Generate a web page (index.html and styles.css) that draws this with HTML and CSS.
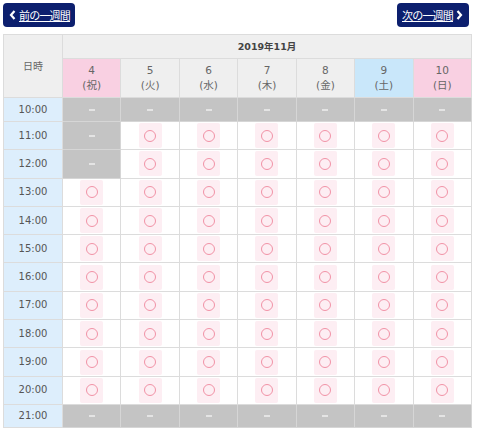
FILE: index.html
```html
<!DOCTYPE html>
<html lang="ja">
<head>
<meta charset="utf-8">
<link rel="stylesheet" href="styles.css">
</head>
<body>
<div class="wrap">
  <div class="nav">
    <a class="btn" href="#"><svg class="chev" width="7" height="10" viewBox="0 0 7 10"><path d="M5.5 1 L2 5 L5.5 9" fill="none" stroke="#fff" stroke-width="2.2"/></svg><span class="lbl">前の一週間</span></a>
    <a class="btn next" href="#"><span class="lbl">次の一週間</span><svg class="chev" width="7" height="10" viewBox="0 0 7 10"><path d="M1.5 1 L5 5 L1.5 9" fill="none" stroke="#fff" stroke-width="2.2"/></svg></a>
  </div>
  <table class="cal">
    <colgroup>
      <col class="c-time"><col><col><col><col><col><col><col>
    </colgroup>
    <thead>
      <tr class="h1"><th rowspan="2" class="corner">日時</th><th colspan="7" class="month">2019年11月</th></tr>
      <tr class="h2">
        <th class="pink">4<br>(祝)</th>
        <th>5<br>(火)</th>
        <th>6<br>(水)</th>
        <th>7<br>(木)</th>
        <th>8<br>(金)</th>
        <th class="blue">9<br>(土)</th>
        <th class="pink">10<br>(日)</th>
      </tr>
    </thead>
    <tbody>
      <tr class="r-first"><th class="time">10:00</th>
        <td class="off"><span class="dash"></span></td><td class="off"><span class="dash"></span></td><td class="off"><span class="dash"></span></td><td class="off"><span class="dash"></span></td><td class="off"><span class="dash"></span></td><td class="off"><span class="dash"></span></td><td class="off"><span class="dash"></span></td></tr>
      <tr class="r"><th class="time">11:00</th>
        <td class="off"><span class="dash"></span></td><td><span class="ok"><span class="ring"></span></span></td><td><span class="ok"><span class="ring"></span></span></td><td><span class="ok"><span class="ring"></span></span></td><td><span class="ok"><span class="ring"></span></span></td><td><span class="ok"><span class="ring"></span></span></td><td><span class="ok"><span class="ring"></span></span></td></tr>
      <tr class="r"><th class="time">12:00</th>
        <td class="off"><span class="dash"></span></td><td><span class="ok"><span class="ring"></span></span></td><td><span class="ok"><span class="ring"></span></span></td><td><span class="ok"><span class="ring"></span></span></td><td><span class="ok"><span class="ring"></span></span></td><td><span class="ok"><span class="ring"></span></span></td><td><span class="ok"><span class="ring"></span></span></td></tr>
      <tr class="r"><th class="time">13:00</th>
        <td><span class="ok"><span class="ring"></span></span></td><td><span class="ok"><span class="ring"></span></span></td><td><span class="ok"><span class="ring"></span></span></td><td><span class="ok"><span class="ring"></span></span></td><td><span class="ok"><span class="ring"></span></span></td><td><span class="ok"><span class="ring"></span></span></td><td><span class="ok"><span class="ring"></span></span></td></tr>
      <tr class="r"><th class="time">14:00</th>
        <td><span class="ok"><span class="ring"></span></span></td><td><span class="ok"><span class="ring"></span></span></td><td><span class="ok"><span class="ring"></span></span></td><td><span class="ok"><span class="ring"></span></span></td><td><span class="ok"><span class="ring"></span></span></td><td><span class="ok"><span class="ring"></span></span></td><td><span class="ok"><span class="ring"></span></span></td></tr>
      <tr class="r"><th class="time">15:00</th>
        <td><span class="ok"><span class="ring"></span></span></td><td><span class="ok"><span class="ring"></span></span></td><td><span class="ok"><span class="ring"></span></span></td><td><span class="ok"><span class="ring"></span></span></td><td><span class="ok"><span class="ring"></span></span></td><td><span class="ok"><span class="ring"></span></span></td><td><span class="ok"><span class="ring"></span></span></td></tr>
      <tr class="r"><th class="time">16:00</th>
        <td><span class="ok"><span class="ring"></span></span></td><td><span class="ok"><span class="ring"></span></span></td><td><span class="ok"><span class="ring"></span></span></td><td><span class="ok"><span class="ring"></span></span></td><td><span class="ok"><span class="ring"></span></span></td><td><span class="ok"><span class="ring"></span></span></td><td><span class="ok"><span class="ring"></span></span></td></tr>
      <tr class="r"><th class="time">17:00</th>
        <td><span class="ok"><span class="ring"></span></span></td><td><span class="ok"><span class="ring"></span></span></td><td><span class="ok"><span class="ring"></span></span></td><td><span class="ok"><span class="ring"></span></span></td><td><span class="ok"><span class="ring"></span></span></td><td><span class="ok"><span class="ring"></span></span></td><td><span class="ok"><span class="ring"></span></span></td></tr>
      <tr class="r"><th class="time">18:00</th>
        <td><span class="ok"><span class="ring"></span></span></td><td><span class="ok"><span class="ring"></span></span></td><td><span class="ok"><span class="ring"></span></span></td><td><span class="ok"><span class="ring"></span></span></td><td><span class="ok"><span class="ring"></span></span></td><td><span class="ok"><span class="ring"></span></span></td><td><span class="ok"><span class="ring"></span></span></td></tr>
      <tr class="r"><th class="time">19:00</th>
        <td><span class="ok"><span class="ring"></span></span></td><td><span class="ok"><span class="ring"></span></span></td><td><span class="ok"><span class="ring"></span></span></td><td><span class="ok"><span class="ring"></span></span></td><td><span class="ok"><span class="ring"></span></span></td><td><span class="ok"><span class="ring"></span></span></td><td><span class="ok"><span class="ring"></span></span></td></tr>
      <tr class="r"><th class="time">20:00</th>
        <td><span class="ok"><span class="ring"></span></span></td><td><span class="ok"><span class="ring"></span></span></td><td><span class="ok"><span class="ring"></span></span></td><td><span class="ok"><span class="ring"></span></span></td><td><span class="ok"><span class="ring"></span></span></td><td><span class="ok"><span class="ring"></span></span></td><td><span class="ok"><span class="ring"></span></span></td></tr>
      <tr class="r-last"><th class="time">21:00</th>
        <td class="off"><span class="dash"></span></td><td class="off"><span class="dash"></span></td><td class="off"><span class="dash"></span></td><td class="off"><span class="dash"></span></td><td class="off"><span class="dash"></span></td><td class="off"><span class="dash"></span></td><td class="off"><span class="dash"></span></td></tr>
    </tbody>
  </table>
</div>
</body>
</html>
```
FILE: styles.css
```css
html, body {
  margin: 0;
  padding: 0;
  background: #fff;
}
body {
  font-family: "DejaVu Sans", "Noto Sans CJK JP", sans-serif;
  color: #555;
}
.wrap {
  padding: 3px 7px 0 3px;
}
.nav {
  display: flex;
  justify-content: space-between;
  height: 24px;
  margin-bottom: 7px;
}
.btn {
  display: flex;
  align-items: center;
  gap: 3px;
  background: #0c1f6e;
  color: #fff;
  border-radius: 4px;
  padding: 0 5px 0 6px;
  height: 24px;
  text-decoration: none;
  font-size: 11px;
  font-family: "Noto Sans CJK JP", sans-serif;
}
.btn.next {
  margin-right: 3px;
  padding: 0 6px 0 5px;
}
.btn .lbl {
  text-decoration: underline;
  letter-spacing: -0.8px;
}
.chev {
  display: block;
  flex: none;
}
.cal {
  width: 469px;
  border-collapse: collapse;
  table-layout: fixed;
  font-size: 10px;
}
.c-time {
  width: 59px;
}
.cal th, .cal td {
  border: 1px solid #dcdcdc;
  padding: 0;
  text-align: center;
  font-weight: normal;
  line-height: 12px;
}
.cal thead th {
  background: #efefef;
  color: #666;
}
.h1 {
  height: 24px;
}
.h2 {
  height: 39px;
}
.h2 th {
  line-height: 15px;
  font-size: 10.5px;
}
.cal .month {
  font-weight: bold;
  color: #444;
  font-size: 9.5px;
}
.cal .corner {
  font-family: "Noto Sans CJK JP", sans-serif;
}
.cal th.pink {
  background: #f9d0e2;
}
.cal th.blue {
  background: #c9e7fa;
}
.r-first {
  height: 24px;
}
.r {
  height: 28.3px;
}
.r-last {
  height: 23px;
}
.cal .time {
  background: #ddeefc;
  color: #555;
  font-size: 10px;
}
.cal td {
  background: #fff;
}
.cal td.off {
  background: #c4c4c4;
  border-color: #d6d6d6;
}
.dash {
  display: inline-block;
  width: 6px;
  height: 2px;
  background: #e4e4e4;
  vertical-align: middle;
}
.ok {
  display: inline-flex;
  width: 23px;
  height: 25px;
  background: #fdeef3;
  border-radius: 2px;
  align-items: center;
  justify-content: center;
  vertical-align: middle;
}
.ring {
  width: 10px;
  height: 10px;
  border: 1.3px solid #f192a6;
  border-radius: 50%;
}
```
